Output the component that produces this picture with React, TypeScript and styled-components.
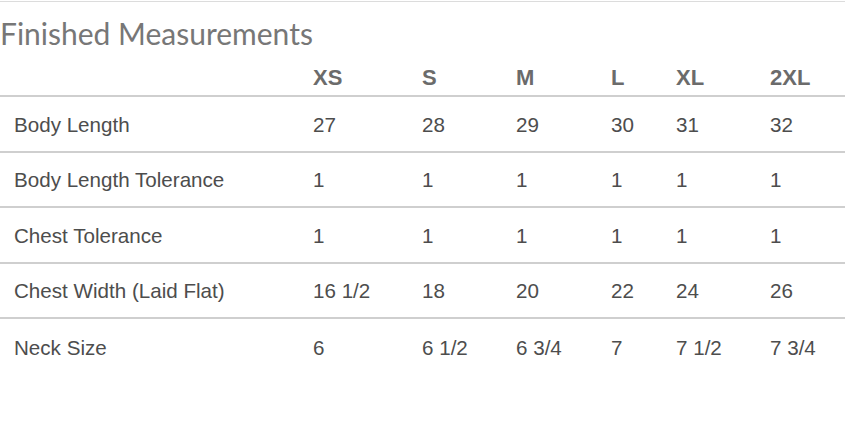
import styled, { createGlobalStyle } from "styled-components";

const GlobalStyle = createGlobalStyle`
  html, body {
    margin: 0;
    padding: 0;
    background: #ffffff;
  }
`;

const Page = styled.div`
  width: 845px;
  height: 442px;
  box-sizing: border-box;
  padding-top: 1px;
  background: #ffffff;
  overflow: hidden;
`;

const Sheet = styled.div`
  border-top: 1.5px solid #dcdcdc;
`;

const Title = styled.h2`
  margin: 0;
  height: 53px;
  padding-top: 11px;
  box-sizing: border-box;
  font-family: Lato, "Open Sans", sans-serif;
  font-weight: 400;
  font-size: 30px;
  line-height: 40px;
  color: #777777;
`;

const Grid = styled.div`
  display: grid;
  grid-template-columns: 313px 109px 94px 95px 65px 94px 1fr;
`;

const Row = styled.div<{ $head?: boolean; $last?: boolean }>`
  display: contents;

  & > div {
    height: ${(p) => (p.$head ? "42px" : "55.5px")};
    border-bottom: ${(p) => (p.$last ? "none" : "2px solid #cfcfcf")};
    font-weight: ${(p) => (p.$head ? 700 : 400)};
    font-size: ${(p) => (p.$head ? "22px" : "20.6px")};
    color: ${(p) => (p.$head ? "#6b6b6b" : "#4d4d4d")};
    align-items: ${(p) => (p.$head ? "flex-end" : "center")};
    padding-bottom: ${(p) => (p.$head ? "4px" : "0")};
    padding-top: ${(p) => (p.$head ? "0" : "2px")};
  }
`;

const Cell = styled.div<{ $label?: boolean }>`
  display: flex;
  box-sizing: border-box;
  padding-left: ${(p) => (p.$label ? "14px" : "0")};
  font-family: "Liberation Sans", Arial, sans-serif;
  white-space: nowrap;
`;

const sizes = ["XS", "S", "M", "L", "XL", "2XL"];

const rows: { label: string; values: string[] }[] = [
  { label: "Body Length", values: ["27", "28", "29", "30", "31", "32"] },
  { label: "Body Length Tolerance", values: ["1", "1", "1", "1", "1", "1"] },
  { label: "Chest Tolerance", values: ["1", "1", "1", "1", "1", "1"] },
  {
    label: "Chest Width (Laid Flat)",
    values: ["16 1/2", "18", "20", "22", "24", "26"],
  },
  {
    label: "Neck Size",
    values: ["6", "6 1/2", "6 3/4", "7", "7 1/2", "7 3/4"],
  },
];

export default function App() {
  return (
    <Page>
      <GlobalStyle />
      <Sheet>
        <Title>Finished Measurements</Title>
        <Grid>
          <Row $head>
            <Cell $label />
            {sizes.map((s) => (
              <Cell key={s}>{s}</Cell>
            ))}
          </Row>
          {rows.map((r, i) => (
            <Row key={r.label} $last={i === rows.length - 1}>
              <Cell $label>{r.label}</Cell>
              {r.values.map((v, j) => (
                <Cell key={j}>{v}</Cell>
              ))}
            </Row>
          ))}
        </Grid>
      </Sheet>
    </Page>
  );
}
